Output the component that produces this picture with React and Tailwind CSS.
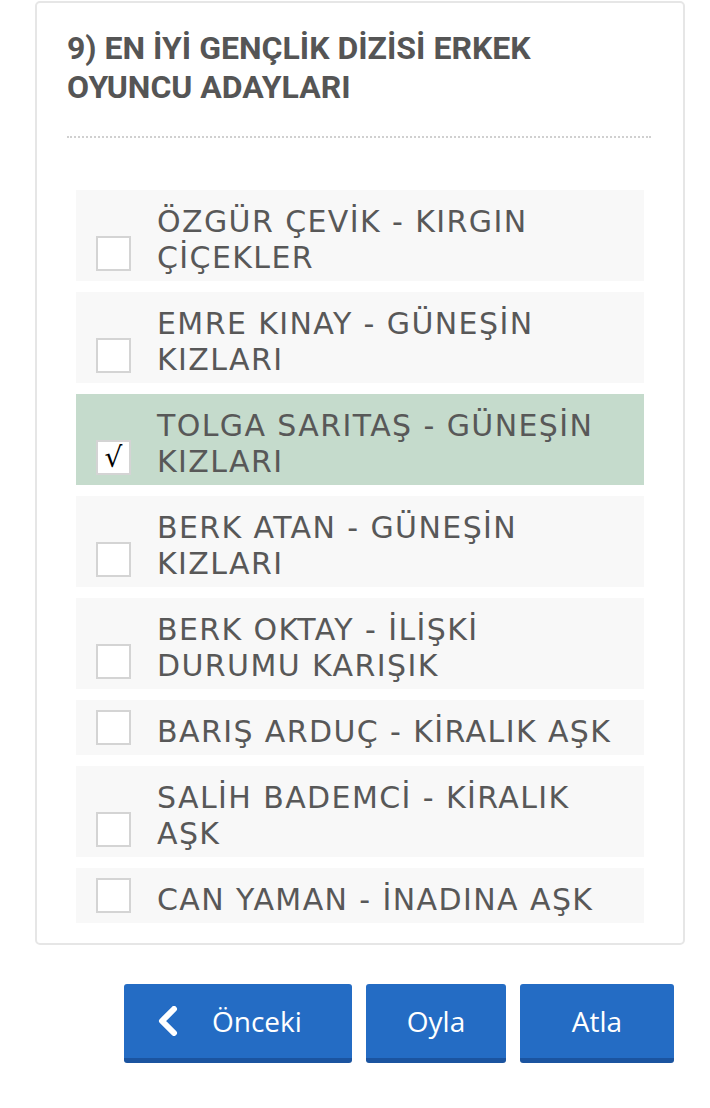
const options = [
  { lines: ['ÖZGÜR ÇEVİK - KIRGIN', 'ÇİÇEKLER'] },
  { lines: ['EMRE KINAY - GÜNEŞİN', 'KIZLARI'] },
  { lines: ['TOLGA SARITAŞ - GÜNEŞİN', 'KIZLARI'], checked: true },
  { lines: ['BERK ATAN - GÜNEŞİN', 'KIZLARI'] },
  { lines: ['BERK OKTAY - İLİŞKİ', 'DURUMU KARIŞIK'] },
  { lines: ['BARIŞ ARDUÇ - KİRALIK AŞK'] },
  { lines: ['SALİH BADEMCİ - KİRALIK', 'AŞK'] },
  { lines: ['CAN YAMAN - İNADINA AŞK'] },
]

const Option = ({ lines, checked }) => (
  <div
    className={`flex items-end gap-[26px] pt-[13.5px] pb-[5.5px] pl-5 pr-3 ${
      checked ? 'bg-[#c5dbcc]' : 'bg-[#f8f8f8]'
    }`}
  >
    <div className="w-[35px] h-[35px] shrink-0 -mt-[4px] mb-[4.5px] border-2 border-[#d4d4d4] bg-white flex items-center justify-center">
      {checked && (
        <span className="text-black text-[28px] leading-none" style={{ fontFamily: '"DejaVu Sans", sans-serif' }}>
          √
        </span>
      )}
    </div>
    <div className="text-[30px] leading-[36px] text-[#585858] tracking-[1.4px]" style={{ fontFamily: '"DejaVu Sans", sans-serif' }}>
      {lines.map((l) => (
        <div key={l} className="h-[36px]">{l}</div>
      ))}
    </div>
  </div>
)

export default function App() {
  return (
    <div className="w-[710px] min-h-[1108px] bg-white">
      <div className="ml-[35px] mr-[25px] mt-px border-2 border-[#e6e6e6] rounded-[5px] px-[30px] pt-[26px] pb-[20px]">
        <h2
          className="text-[32px] leading-[39px] font-bold text-[#555]"
          style={{ fontFamily: 'Roboto, sans-serif' }}
        >
          9) EN İYİ GENÇLİK DİZİSİ ERKEK
          <br />
          OYUNCU ADAYLARI
        </h2>
        <div className="mt-[29px] border-t-2 border-dotted border-[#d0d0d0] mr-[2px]" />
        <div className="mt-[52px] mx-[9px] flex flex-col gap-[11px]">
          {options.map((o, i) => (
            <Option key={i} {...o} />
          ))}
        </div>
      </div>

      <div className="flex justify-end gap-[14px] pr-[36px] mt-[39px]" style={{ fontFamily: '"Open Sans", "Noto Sans", sans-serif' }}>
        <button className="h-[79px] w-[228px] rounded-[3px] bg-[#246cc4] border-b-[5px] border-[#1b54a0] text-white text-[28px] flex items-center pl-[31px] gap-[31px]">
          <svg width="26" height="30" viewBox="0 0 26 30" fill="none">
            <polyline points="19,3 7,15 19,27" stroke="white" strokeWidth="6" strokeLinecap="round" strokeLinejoin="round" />
          </svg>
          Önceki
        </button>
        <button className="h-[79px] w-[140px] rounded-[3px] bg-[#246cc4] border-b-[5px] border-[#1b54a0] text-white text-[28px] flex items-center justify-center">
          Oyla
        </button>
        <button className="h-[79px] w-[154px] rounded-[3px] bg-[#246cc4] border-b-[5px] border-[#1b54a0] text-white text-[28px] flex items-center justify-center">
          Atla
        </button>
      </div>
    </div>
  )
}
